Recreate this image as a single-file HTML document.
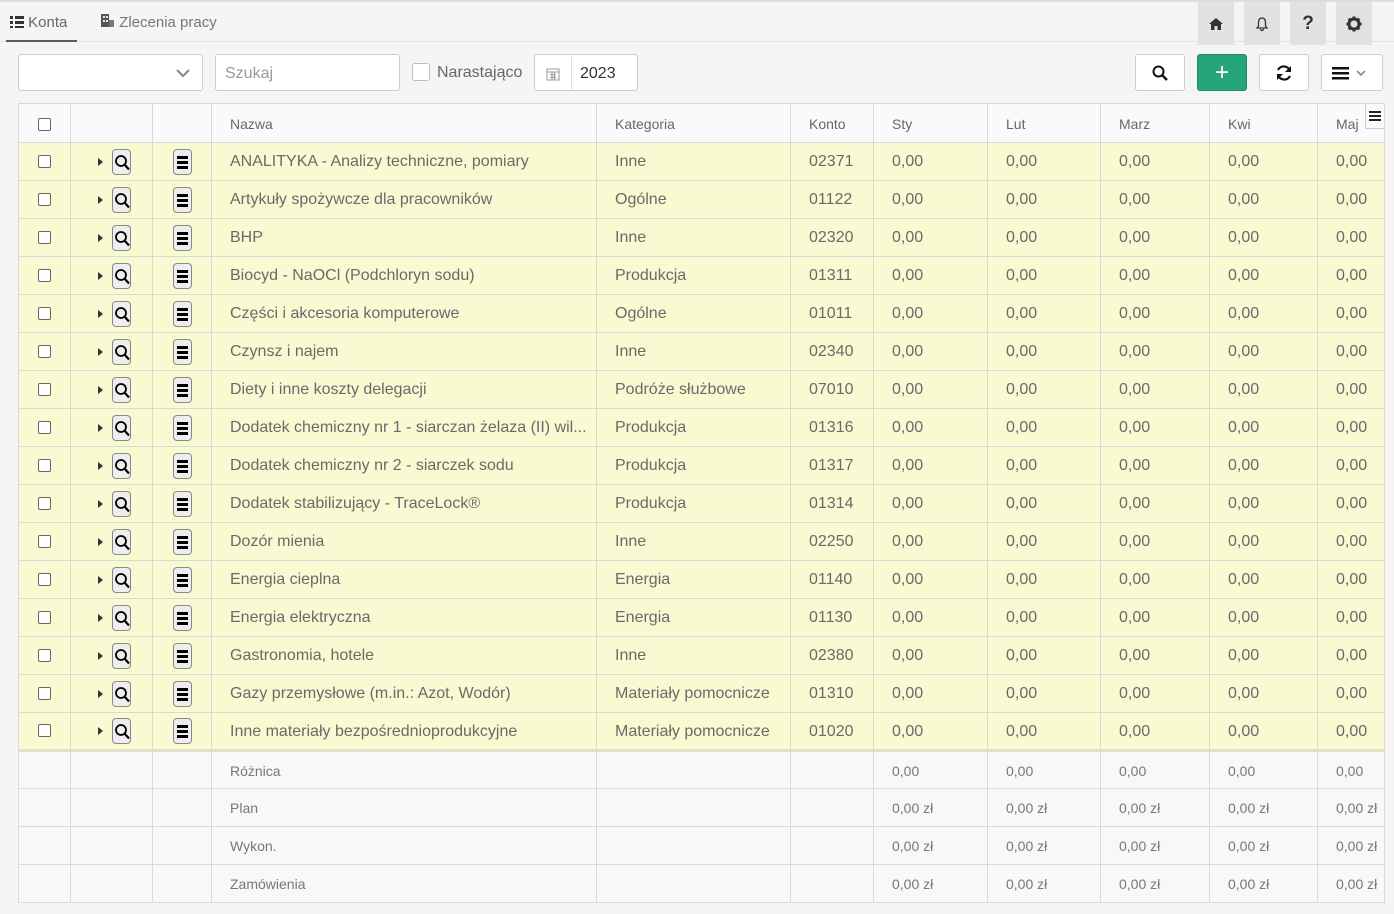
<!DOCTYPE html>
<html><head><meta charset="utf-8">
<style>
*{box-sizing:border-box;margin:0;padding:0}
body{width:1394px;height:914px;background:#f5f5f5;font-family:"Liberation Sans",sans-serif;color:#666;position:relative;overflow:hidden}
.topline{position:absolute;left:0;top:0;width:1394px;height:2px;background:#ddd}
.tabs{position:absolute;left:0;top:2px;width:1394px;height:40px;border-bottom:1px solid #e3e3e3}
.tab{position:absolute;top:12px;font-size:15px;color:#777}
.tab1{left:6px;width:71px;height:28px;border-bottom:2px solid #555a66;padding-left:4px;color:#666}
.ib{position:absolute;top:2px;width:36px;height:43px;background:#e2e2e2;display:flex;align-items:center;justify-content:center}
.ctl{position:absolute;top:54px;height:37px;background:#fff;border:1px solid #ccc;border-radius:3px;font-size:16px;color:#999;display:flex;align-items:center;padding-top:2px}
.btn{position:absolute;top:54px;height:37px;background:#fff;border:1px solid #ccc;border-radius:3px;display:flex;align-items:center;justify-content:center}
table{position:absolute;left:18px;top:103px;border-collapse:collapse;table-layout:fixed;width:1366px}
td{border:1px solid #d9d9d9;height:38px;padding:1px 0 0 18px;font-size:16px;white-space:nowrap;overflow:hidden;text-overflow:ellipsis}
tr.h td{background:#fafafa;font-size:14px;color:#666;height:39px}
tr.r td{background:#f9f9d2;color:#6a6a6a}
tr.f td{background:#f8f8f8;font-size:14px;color:#777}
tr.f1 td{border-top:3px solid #e0e0c8}
.cb{display:inline-block;width:13px;height:13px;border:1.5px solid #666;border-radius:2px;background:#fff;vertical-align:middle}
td.c0{padding:0;text-align:center}
td.c1{padding:0 0 0 27px}
td.c2{padding:0;text-align:center}
.tri{display:inline-block;width:0;height:0;border-left:5px solid #333;border-top:4px solid transparent;border-bottom:4px solid transparent;vertical-align:middle;margin-right:9px}
.mb{display:inline-block;width:19px;height:26px;border:1px solid #888;border-radius:4px;background:#eee;vertical-align:middle;position:relative}
.mb svg{position:absolute;left:1px;top:4px}
.hm{display:inline-block;width:19px;height:26px;border:1px solid #888;border-radius:4px;background:#eee;vertical-align:middle;position:relative}
.hm i{position:absolute;left:3px;width:11px;height:3px;background:#000}
</style></head><body>
<div class="topline"></div>
<div class="tabs">
<div class="tab tab1"><svg width="14" height="12" style="vertical-align:-1px"><rect x="0" y="0" width="3" height="3" fill="#333"/><rect x="5" y="0" width="9" height="3" fill="#333"/><rect x="0" y="5" width="3" height="3" fill="#333"/><rect x="5" y="5" width="9" height="3" fill="#333"/><rect x="0" y="10" width="3" height="2" fill="#333"/><rect x="5" y="10" width="9" height="2" fill="#333"/></svg> Konta</div>
<div class="tab" style="left:100px"><svg width="15" height="14" style="vertical-align:-1px"><rect x="1" y="0" width="8" height="13" fill="#555"/><rect x="9" y="6" width="5" height="7" fill="#777"/><rect x="3" y="2" width="2" height="2" fill="#eee"/><rect x="6" y="2" width="2" height="2" fill="#eee"/><rect x="3" y="6" width="2" height="2" fill="#eee"/><rect x="6" y="6" width="2" height="2" fill="#eee"/></svg> Zlecenia pracy</div>
</div>
<div class="ib" style="left:1198px"><svg width="16" height="14"><path d="M8 1 L1 7 H3 V13 H6.5 V9 H9.5 V13 H13 V7 H15 Z" fill="#333"/></svg></div>
<div class="ib" style="left:1244px"><svg width="16" height="16"><path d="M8 2 C5 2 4.5 4.5 4.5 7 V10 L3 12 H13 L11.5 10 V7 C11.5 4.5 11 2 8 2 Z M6.5 13 A1.5 1.5 0 0 0 9.5 13" fill="none" stroke="#333" stroke-width="1.3"/></svg></div>
<div class="ib" style="left:1290px;font-size:19px;font-weight:bold;color:#333">?</div>
<div class="ib" style="left:1336px"><svg width="16" height="16"><circle cx="8" cy="8" r="5" fill="none" stroke="#333" stroke-width="3"/><g stroke="#333" stroke-width="3"><line x1="8" y1="0.5" x2="8" y2="3"/><line x1="8" y1="13" x2="8" y2="15.5"/><line x1="0.5" y1="8" x2="3" y2="8"/><line x1="13" y1="8" x2="15.5" y2="8"/><line x1="2.7" y1="2.7" x2="4.5" y2="4.5"/><line x1="11.5" y1="11.5" x2="13.3" y2="13.3"/><line x1="13.3" y1="2.7" x2="11.5" y2="4.5"/><line x1="2.7" y1="13.3" x2="4.5" y2="11.5"/></g></svg></div>

<div class="ctl" style="left:18px;width:185px"><svg style="position:absolute;right:12px" width="14" height="9"><path d="M1 1 L7 7 L13 1" fill="none" stroke="#888" stroke-width="2"/></svg></div>
<div class="ctl" style="left:215px;width:185px;padding-left:9px">Szukaj</div>
<div style="position:absolute;left:412px;top:63px;width:18px;height:18px;border:1px solid #bbb;border-radius:3px;background:#fff"></div>
<div style="position:absolute;left:437px;top:64px;font-size:16px;color:#666">Narastająco</div>
<div class="ctl" style="left:534px;width:104px;color:#333"><div style="width:37px;height:100%;border-right:1px solid #ddd;display:flex;align-items:center;justify-content:center"><svg width="14" height="14"><rect x="1" y="2" width="12" height="11" fill="none" stroke="#999"/><path d="M1 5 H13 M4 8 H10 M4 10.5 H10 M6 5 V13 M8.5 5 V13" stroke="#999"/></svg></div><span style="padding-left:8px">2023</span></div>

<div class="btn" style="left:1135px;width:50px"><svg width="16" height="16"><circle cx="6.5" cy="6.5" r="5" fill="none" stroke="#111" stroke-width="2"/><line x1="10" y1="10" x2="15" y2="15" stroke="#111" stroke-width="2.4"/></svg></div>
<div class="btn" style="left:1197px;width:50px;background:#26a57a;border-color:#1f8c67;color:#fff;font-size:24px">+</div>
<div class="btn" style="left:1259px;width:50px"><svg width="18" height="18"><path d="M15 7 A6.5 6.5 0 0 0 3 6" fill="none" stroke="#111" stroke-width="2.2"/><path d="M3 11 A6.5 6.5 0 0 0 15 12" fill="none" stroke="#111" stroke-width="2.2"/><path d="M16 2 V8 H10 Z" fill="#111"/><path d="M2 16 V10 H8 Z" fill="#111"/></svg></div>
<div class="btn" style="left:1321px;width:62px"><svg width="40" height="14"><rect x="0" y="1" width="17" height="2.5" fill="#111"/><rect x="0" y="6" width="17" height="2.5" fill="#111"/><rect x="0" y="11" width="17" height="2.5" fill="#111"/><path d="M25 5 L29 9 L33 5" fill="none" stroke="#888" stroke-width="1.6"/></svg></div>

<table>
<colgroup><col style="width:52px"><col style="width:82px"><col style="width:59px"><col style="width:385px"><col style="width:194px"><col style="width:83px"><col style="width:114px"><col style="width:113px"><col style="width:109px"><col style="width:108px"><col style="width:67px"></colgroup>
<tr class="h"><td class="c0"><span class="cb"></span></td><td></td><td></td><td>Nazwa</td><td>Kategoria</td><td>Konto</td><td>Sty</td><td>Lut</td><td>Marz</td><td>Kwi</td><td>Maj</td></tr>
<tr class="r"><td class="c0"><span class="cb"></span></td><td class="c1"><span class="tri"></span><span class="mb"><svg width="16" height="17"><circle cx="7" cy="7" r="5" fill="none" stroke="#000" stroke-width="1.8"/><line x1="10.5" y1="10.5" x2="15" y2="15.5" stroke="#000" stroke-width="2.2"/></svg></span></td><td class="c2"><span class="hm"><i style="top:6px"></i><i style="top:11px"></i><i style="top:16px"></i></span></td><td>ANALITYKA - Analizy techniczne, pomiary</td><td>Inne</td><td>02371</td><td>0,00</td><td>0,00</td><td>0,00</td><td>0,00</td><td>0,00</td></tr>
<tr class="r"><td class="c0"><span class="cb"></span></td><td class="c1"><span class="tri"></span><span class="mb"><svg width="16" height="17"><circle cx="7" cy="7" r="5" fill="none" stroke="#000" stroke-width="1.8"/><line x1="10.5" y1="10.5" x2="15" y2="15.5" stroke="#000" stroke-width="2.2"/></svg></span></td><td class="c2"><span class="hm"><i style="top:6px"></i><i style="top:11px"></i><i style="top:16px"></i></span></td><td>Artykuły spożywcze dla pracowników</td><td>Ogólne</td><td>01122</td><td>0,00</td><td>0,00</td><td>0,00</td><td>0,00</td><td>0,00</td></tr>
<tr class="r"><td class="c0"><span class="cb"></span></td><td class="c1"><span class="tri"></span><span class="mb"><svg width="16" height="17"><circle cx="7" cy="7" r="5" fill="none" stroke="#000" stroke-width="1.8"/><line x1="10.5" y1="10.5" x2="15" y2="15.5" stroke="#000" stroke-width="2.2"/></svg></span></td><td class="c2"><span class="hm"><i style="top:6px"></i><i style="top:11px"></i><i style="top:16px"></i></span></td><td>BHP</td><td>Inne</td><td>02320</td><td>0,00</td><td>0,00</td><td>0,00</td><td>0,00</td><td>0,00</td></tr>
<tr class="r"><td class="c0"><span class="cb"></span></td><td class="c1"><span class="tri"></span><span class="mb"><svg width="16" height="17"><circle cx="7" cy="7" r="5" fill="none" stroke="#000" stroke-width="1.8"/><line x1="10.5" y1="10.5" x2="15" y2="15.5" stroke="#000" stroke-width="2.2"/></svg></span></td><td class="c2"><span class="hm"><i style="top:6px"></i><i style="top:11px"></i><i style="top:16px"></i></span></td><td>Biocyd - NaOCl (Podchloryn sodu)</td><td>Produkcja</td><td>01311</td><td>0,00</td><td>0,00</td><td>0,00</td><td>0,00</td><td>0,00</td></tr>
<tr class="r"><td class="c0"><span class="cb"></span></td><td class="c1"><span class="tri"></span><span class="mb"><svg width="16" height="17"><circle cx="7" cy="7" r="5" fill="none" stroke="#000" stroke-width="1.8"/><line x1="10.5" y1="10.5" x2="15" y2="15.5" stroke="#000" stroke-width="2.2"/></svg></span></td><td class="c2"><span class="hm"><i style="top:6px"></i><i style="top:11px"></i><i style="top:16px"></i></span></td><td>Części i akcesoria komputerowe</td><td>Ogólne</td><td>01011</td><td>0,00</td><td>0,00</td><td>0,00</td><td>0,00</td><td>0,00</td></tr>
<tr class="r"><td class="c0"><span class="cb"></span></td><td class="c1"><span class="tri"></span><span class="mb"><svg width="16" height="17"><circle cx="7" cy="7" r="5" fill="none" stroke="#000" stroke-width="1.8"/><line x1="10.5" y1="10.5" x2="15" y2="15.5" stroke="#000" stroke-width="2.2"/></svg></span></td><td class="c2"><span class="hm"><i style="top:6px"></i><i style="top:11px"></i><i style="top:16px"></i></span></td><td>Czynsz i najem</td><td>Inne</td><td>02340</td><td>0,00</td><td>0,00</td><td>0,00</td><td>0,00</td><td>0,00</td></tr>
<tr class="r"><td class="c0"><span class="cb"></span></td><td class="c1"><span class="tri"></span><span class="mb"><svg width="16" height="17"><circle cx="7" cy="7" r="5" fill="none" stroke="#000" stroke-width="1.8"/><line x1="10.5" y1="10.5" x2="15" y2="15.5" stroke="#000" stroke-width="2.2"/></svg></span></td><td class="c2"><span class="hm"><i style="top:6px"></i><i style="top:11px"></i><i style="top:16px"></i></span></td><td>Diety i inne koszty delegacji</td><td>Podróże służbowe</td><td>07010</td><td>0,00</td><td>0,00</td><td>0,00</td><td>0,00</td><td>0,00</td></tr>
<tr class="r"><td class="c0"><span class="cb"></span></td><td class="c1"><span class="tri"></span><span class="mb"><svg width="16" height="17"><circle cx="7" cy="7" r="5" fill="none" stroke="#000" stroke-width="1.8"/><line x1="10.5" y1="10.5" x2="15" y2="15.5" stroke="#000" stroke-width="2.2"/></svg></span></td><td class="c2"><span class="hm"><i style="top:6px"></i><i style="top:11px"></i><i style="top:16px"></i></span></td><td>Dodatek chemiczny nr 1 - siarczan żelaza (II) wil...</td><td>Produkcja</td><td>01316</td><td>0,00</td><td>0,00</td><td>0,00</td><td>0,00</td><td>0,00</td></tr>
<tr class="r"><td class="c0"><span class="cb"></span></td><td class="c1"><span class="tri"></span><span class="mb"><svg width="16" height="17"><circle cx="7" cy="7" r="5" fill="none" stroke="#000" stroke-width="1.8"/><line x1="10.5" y1="10.5" x2="15" y2="15.5" stroke="#000" stroke-width="2.2"/></svg></span></td><td class="c2"><span class="hm"><i style="top:6px"></i><i style="top:11px"></i><i style="top:16px"></i></span></td><td>Dodatek chemiczny nr 2 - siarczek sodu</td><td>Produkcja</td><td>01317</td><td>0,00</td><td>0,00</td><td>0,00</td><td>0,00</td><td>0,00</td></tr>
<tr class="r"><td class="c0"><span class="cb"></span></td><td class="c1"><span class="tri"></span><span class="mb"><svg width="16" height="17"><circle cx="7" cy="7" r="5" fill="none" stroke="#000" stroke-width="1.8"/><line x1="10.5" y1="10.5" x2="15" y2="15.5" stroke="#000" stroke-width="2.2"/></svg></span></td><td class="c2"><span class="hm"><i style="top:6px"></i><i style="top:11px"></i><i style="top:16px"></i></span></td><td>Dodatek stabilizujący - TraceLock®</td><td>Produkcja</td><td>01314</td><td>0,00</td><td>0,00</td><td>0,00</td><td>0,00</td><td>0,00</td></tr>
<tr class="r"><td class="c0"><span class="cb"></span></td><td class="c1"><span class="tri"></span><span class="mb"><svg width="16" height="17"><circle cx="7" cy="7" r="5" fill="none" stroke="#000" stroke-width="1.8"/><line x1="10.5" y1="10.5" x2="15" y2="15.5" stroke="#000" stroke-width="2.2"/></svg></span></td><td class="c2"><span class="hm"><i style="top:6px"></i><i style="top:11px"></i><i style="top:16px"></i></span></td><td>Dozór mienia</td><td>Inne</td><td>02250</td><td>0,00</td><td>0,00</td><td>0,00</td><td>0,00</td><td>0,00</td></tr>
<tr class="r"><td class="c0"><span class="cb"></span></td><td class="c1"><span class="tri"></span><span class="mb"><svg width="16" height="17"><circle cx="7" cy="7" r="5" fill="none" stroke="#000" stroke-width="1.8"/><line x1="10.5" y1="10.5" x2="15" y2="15.5" stroke="#000" stroke-width="2.2"/></svg></span></td><td class="c2"><span class="hm"><i style="top:6px"></i><i style="top:11px"></i><i style="top:16px"></i></span></td><td>Energia cieplna</td><td>Energia</td><td>01140</td><td>0,00</td><td>0,00</td><td>0,00</td><td>0,00</td><td>0,00</td></tr>
<tr class="r"><td class="c0"><span class="cb"></span></td><td class="c1"><span class="tri"></span><span class="mb"><svg width="16" height="17"><circle cx="7" cy="7" r="5" fill="none" stroke="#000" stroke-width="1.8"/><line x1="10.5" y1="10.5" x2="15" y2="15.5" stroke="#000" stroke-width="2.2"/></svg></span></td><td class="c2"><span class="hm"><i style="top:6px"></i><i style="top:11px"></i><i style="top:16px"></i></span></td><td>Energia elektryczna</td><td>Energia</td><td>01130</td><td>0,00</td><td>0,00</td><td>0,00</td><td>0,00</td><td>0,00</td></tr>
<tr class="r"><td class="c0"><span class="cb"></span></td><td class="c1"><span class="tri"></span><span class="mb"><svg width="16" height="17"><circle cx="7" cy="7" r="5" fill="none" stroke="#000" stroke-width="1.8"/><line x1="10.5" y1="10.5" x2="15" y2="15.5" stroke="#000" stroke-width="2.2"/></svg></span></td><td class="c2"><span class="hm"><i style="top:6px"></i><i style="top:11px"></i><i style="top:16px"></i></span></td><td>Gastronomia, hotele</td><td>Inne</td><td>02380</td><td>0,00</td><td>0,00</td><td>0,00</td><td>0,00</td><td>0,00</td></tr>
<tr class="r"><td class="c0"><span class="cb"></span></td><td class="c1"><span class="tri"></span><span class="mb"><svg width="16" height="17"><circle cx="7" cy="7" r="5" fill="none" stroke="#000" stroke-width="1.8"/><line x1="10.5" y1="10.5" x2="15" y2="15.5" stroke="#000" stroke-width="2.2"/></svg></span></td><td class="c2"><span class="hm"><i style="top:6px"></i><i style="top:11px"></i><i style="top:16px"></i></span></td><td>Gazy przemysłowe (m.in.: Azot, Wodór)</td><td>Materiały pomocnicze</td><td>01310</td><td>0,00</td><td>0,00</td><td>0,00</td><td>0,00</td><td>0,00</td></tr>
<tr class="r"><td class="c0"><span class="cb"></span></td><td class="c1"><span class="tri"></span><span class="mb"><svg width="16" height="17"><circle cx="7" cy="7" r="5" fill="none" stroke="#000" stroke-width="1.8"/><line x1="10.5" y1="10.5" x2="15" y2="15.5" stroke="#000" stroke-width="2.2"/></svg></span></td><td class="c2"><span class="hm"><i style="top:6px"></i><i style="top:11px"></i><i style="top:16px"></i></span></td><td>Inne materiały bezpośrednioprodukcyjne</td><td>Materiały pomocnicze</td><td>01020</td><td>0,00</td><td>0,00</td><td>0,00</td><td>0,00</td><td>0,00</td></tr>
<tr class="f f1"><td></td><td></td><td></td><td>Różnica</td><td></td><td></td><td>0,00</td><td>0,00</td><td>0,00</td><td>0,00</td><td>0,00</td></tr>
<tr class="f"><td></td><td></td><td></td><td>Plan</td><td></td><td></td><td>0,00 zł</td><td>0,00 zł</td><td>0,00 zł</td><td>0,00 zł</td><td>0,00 zł</td></tr>
<tr class="f"><td></td><td></td><td></td><td>Wykon.</td><td></td><td></td><td>0,00 zł</td><td>0,00 zł</td><td>0,00 zł</td><td>0,00 zł</td><td>0,00 zł</td></tr>
<tr class="f"><td></td><td></td><td></td><td>Zamówienia</td><td></td><td></td><td>0,00 zł</td><td>0,00 zł</td><td>0,00 zł</td><td>0,00 zł</td><td>0,00 zł</td></tr>
</table>
<div style="position:absolute;left:1365px;top:104px;width:19px;height:25px;background:#fafafa;border:1px solid #ccc;border-top:none;border-right:none"><svg width="17" height="14" style="position:absolute;left:2px;top:7px"><rect x="1" y="0" width="12" height="2" fill="#222"/><rect x="1" y="4" width="12" height="2" fill="#222"/><rect x="1" y="8" width="12" height="2" fill="#222"/></svg></div>
</body></html>
